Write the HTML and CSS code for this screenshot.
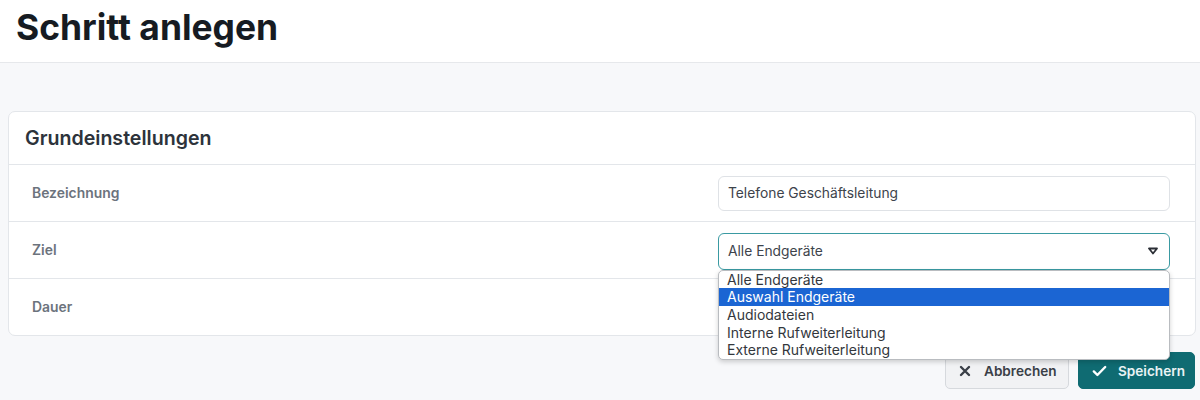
FILE: index.html
```html
<!DOCTYPE html>
<html lang="de">
<head>
<meta charset="utf-8">
<title>Schritt anlegen</title>
<link rel="stylesheet" href="styles.css">
</head>
<body>
<header class="page-header">
  <h1 class="title">Schritt anlegen</h1>
</header>
<main class="content">
  <section class="card">
    <div class="card-header">Grundeinstellungen</div>
    <div class="row">
      <div class="label">Bezeichnung</div>
      <div class="field">
        <div class="input">Telefone Geschäftsleitung</div>
      </div>
    </div>
    <div class="row">
      <div class="label">Ziel</div>
      <div class="field select-wrap">
        <div class="input select">
          <span>Alle Endgeräte</span>
          <svg class="caret" width="10" height="8" viewBox="0 0 10 8"><path d="M1 1.5 H9 L5 6.5 Z" fill="none" stroke="#2b2f36" stroke-width="1.8" stroke-linejoin="round"/></svg>
        </div>
        <ul class="dropdown">
          <li>Alle Endgeräte</li>
          <li class="active">Auswahl Endgeräte</li>
          <li>Audiodateien</li>
          <li>Interne Rufweiterleitung</li>
          <li>Externe Rufweiterleitung</li>
        </ul>
      </div>
    </div>
    <div class="row">
      <div class="label">Dauer</div>
      <div class="field"></div>
    </div>
  </section>
  <div class="actions">
    <button class="btn btn-light">
      <svg class="icon" width="12" height="12" viewBox="0 0 12 12"><path d="M2 2 L10 10 M10 2 L2 10" stroke="#3a3f47" stroke-width="2.4" stroke-linecap="round"/></svg>
      Abbrechen
    </button>
    <button class="btn btn-primary">
      <svg class="icon" width="15" height="12" viewBox="0 0 15 12"><path d="M1.8 6.4 L5.4 10 L13.2 2" fill="none" stroke="#ffffff" stroke-width="2.4" stroke-linecap="round" stroke-linejoin="round"/></svg>
      Speichern
    </button>
  </div>
</main>
</body>
</html>
```

FILE: styles.css
```css
* { box-sizing: border-box; }
html, body { margin: 0; padding: 0; }
body {
  font-family: Inter, "Noto Sans", sans-serif;
  background: #f7f8fa;
  color: #212529;
  height: 400px;
  overflow: hidden;
}
.page-header {
  background: #ffffff;
  height: 63px;
  border-bottom: 1px solid #e6e8eb;
  padding: 0 16px;
  display: flex;
  align-items: center;
}
.title {
  margin: 0;
  font-size: 35.4px;
  font-weight: 700;
  color: #161b22;
  line-height: 1;
  margin-top: -6px;
}
.content {
  padding: 48px 4px 0 8px;
}
.card {
  background: #ffffff;
  border: 1px solid #e3e6ea;
  border-radius: 7px;
}
.card-header {
  height: 53px;
  padding: 0 16px;
  display: flex;
  align-items: center;
  font-size: 19.6px;
  font-weight: 600;
  color: #2d333b;
  border-bottom: 1px solid #e3e6ea;
}
.row {
  display: flex;
  align-items: center;
  height: 57px;
  border-bottom: 1px solid #e3e6ea;
}
.row:last-child { border-bottom: none; height: 56px; }
.label {
  flex: 1;
  padding-left: 23px;
  font-size: 13.9px;
  font-weight: 600;
  color: #6c737d;
}
.field {
  width: 452px;
  margin-right: 25px;
}
.input {
  height: 35px;
  border: 1px solid #dfe2e6;
  border-radius: 6px;
  padding: 0 9px;
  display: flex;
  align-items: center;
  font-size: 13.8px;
  color: #3d434b;
}
.select-wrap { position: relative; }
.select {
  height: 37px;
  border-color: #3a9aa2;
  justify-content: space-between;
  margin-top: 2px;
}
.caret { margin-right: 2px; }
.dropdown {
  position: absolute;
  left: 0;
  right: 0;
  top: 39px;
  margin: 0;
  padding: 0;
  list-style: none;
  background: #ffffff;
  border: 1px solid #b9bcc0;
  border-radius: 5px;
  box-shadow: 0 2px 5px rgba(0,0,0,0.18);
  z-index: 10;
  overflow: hidden;
}
.dropdown li {
  height: 17.7px;
  line-height: 17.7px;
  padding-left: 8px;
  font-size: 14px;
  color: #33373d;
}
.dropdown li.active {
  background: #1b65d3;
  color: #ffffff;
}
.actions {
  display: flex;
  justify-content: flex-end;
  gap: 9px;
  margin-top: 16px;
  margin-right: 1px;
}
.btn {
  height: 37px;
  border-radius: 5px;
  font-family: Inter, "Noto Sans", sans-serif;
  font-size: 13.6px;
  font-weight: 600;
  display: flex;
  align-items: center;
  padding: 0 13px;
  cursor: pointer;
}
.icon { flex-shrink: 0; }
.btn-light {
  background: #f1f2f4;
  border: 1px solid #d6d9dd;
  color: #3a3f47;
  width: 124px;
  gap: 13px;
}
.btn-primary {
  background: #0f6b72;
  border: 1px solid #0f6b72;
  color: #e9f3f4;
  width: 117px;
  gap: 11px;
}
```
